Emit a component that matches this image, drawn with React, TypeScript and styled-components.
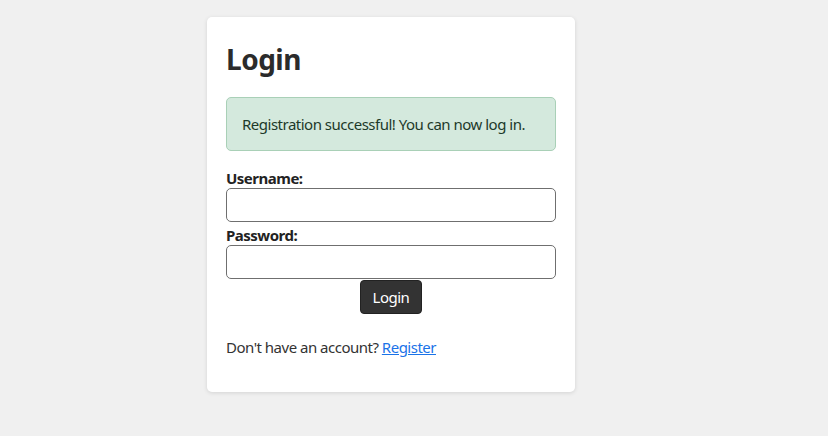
import React from "react";
import styled, { createGlobalStyle } from "styled-components";

const Global = createGlobalStyle`
  html, body { margin: 0; padding: 0; }
  body {
    background: #f0f0f0;
    font-family: "Noto Sans", "Open Sans", sans-serif;
    letter-spacing: -0.5px;
    color: #333;
  }
`;

const Page = styled.div`
  width: 828px;
  height: 436px;
  box-sizing: border-box;
  padding: 17px 0 0 207px;
`;

const Card = styled.div`
  width: 368px;
  height: 375px;
  box-sizing: border-box;
  background: #fff;
  border-radius: 5px;
  box-shadow: 0 1px 4px rgba(0, 0, 0, 0.12);
  padding: 20px 19px;
  display: flex;
  flex-direction: column;
`;

const Title = styled.h1`
  margin: 3px 0 0;
  font-size: 28px;
  font-weight: 700;
  line-height: 38px;
  color: #2b2b2b;
`;

const Alert = styled.div`
  margin-top: 19px;
  height: 54px;
  box-sizing: border-box;
  background: #d4e9dd;
  border: 1px solid #a9d0b7;
  border-radius: 5px;
  padding: 0 15px;
  display: flex;
  align-items: center;
  font-size: 15px;
  color: #1d3a2a;
`;

const Form = styled.form`
  margin-top: 17px;
  display: flex;
  flex-direction: column;
`;

const Label = styled.label`
  font-size: 15px;
  font-weight: 700;
  line-height: 20px;
  color: #222;
`;

const Input = styled.input`
  height: 34px;
  box-sizing: border-box;
  border: 1px solid #6f6f6f;
  border-radius: 5px;
  margin: 0 0 3px;
  font-size: 15px;
  font-family: inherit;
`;

const Button = styled.button`
  align-self: center;
  margin-top: -2px;
  height: 34px;
  padding: 0 12px;
  background: #333;
  color: #fff;
  border: 1px solid #222;
  border-radius: 4px;
  font-family: inherit;
  letter-spacing: -0.5px;
  font-size: 15px;
`;

const Footer = styled.p`
  margin: 23px 0 0;
  font-size: 15px;
  color: #333;
`;

const Link = styled.a`
  color: #1a73e8;
  text-decoration: underline;
`;

export default function App() {
  return (
    <>
      <Global />
      <Page>
        <Card>
          <Title>Login</Title>
          <Alert>Registration successful! You can now log in.</Alert>
          <Form onSubmit={(e) => e.preventDefault()}>
            <Label htmlFor="username">Username:</Label>
            <Input id="username" type="text" />
            <Label htmlFor="password">Password:</Label>
            <Input id="password" type="password" />
            <Button type="submit">Login</Button>
          </Form>
          <Footer>
            Don't have an account? <Link href="#">Register</Link>
          </Footer>
        </Card>
      </Page>
    </>
  );
}
